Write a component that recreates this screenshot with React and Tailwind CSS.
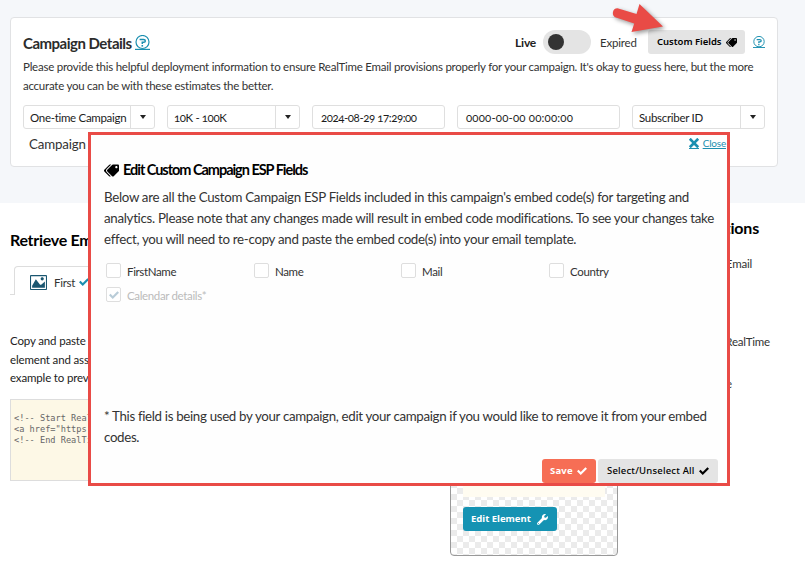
import React from "react";
import { ImCheckmark, ImCross, ImImage } from "react-icons/im";
import { FaTags, FaWrench } from "react-icons/fa";

function Help({ size }) {
  return (
    <svg width={size} height={size} viewBox="0 0 15 15" fill="none" stroke="#1b8fb0">
      <circle cx="7.5" cy="7" r="6.500" strokeWidth="1.200" />
      <path d="M4.600 4.600H8.500Q10.300 4.600 10.300 6 10.300 7.300 8.700 7.300H7.300V9" strokeWidth="1.500" />
      <path d="M7.300 10v1.600" strokeWidth="1.600" />
      <path d="M0 14.400H15" strokeWidth="1.200" />
    </svg>
  );
}

function Field({ children, className, select }) {
  return (
    <div className={"flex h-6 rounded-[3px] border border-[#dfdfdf] bg-white text-[11.5px] leading-[23px] whitespace-nowrap text-[#1c1c1c] " + className}>
      <span className="grow">{children}</span>
      {select && (
        <span className="flex w-6 shrink-0 items-center justify-center border-l border-[#dfdfdf]">
          <svg width="6" height="4" viewBox="0 0 6 4"><path d="M0 0h6L3 4z" fill="#222" /></svg>
        </span>
      )}
    </div>
  );
}

function Check({ label, className, done }) {
  return (
    <label className={"flex items-center text-[11.5px] tracking-[-0.35px] " + className}>
      <span className="mr-[6px] flex size-[15px] items-center justify-center rounded-[2px] border border-[#dedede] bg-white">
        {done && <ImCheckmark size={10} color="#b9ccd8" />}
      </span>
      <span className="pt-[3px]">{label}</span>
    </label>
  );
}

export default function App() {
  return (
    <div className="relative h-[577px] w-[805px] overflow-hidden bg-white font-['Lato',sans-serif] text-[#333]">
      <section className="h-[203px] bg-[#f5f7fa] pt-[17px] pl-[10px]">
        <div className="h-[150px] w-[768px] rounded-[4px] border border-[#e1e2e4] bg-white pt-3 pl-3">
          <div className="flex h-6 items-center whitespace-nowrap">
            <h2 className="w-[112px] pt-[2px] text-[15px] font-bold tracking-[-0.5px] text-[#2c2c2c]">Campaign Details</h2>
            <Help size={15} />
            <span className="ml-[365px] w-[28px] pt-[2px] text-xs font-bold tracking-[-0.2px] text-[#222]">Live</span>
            <span className="flex h-6 w-12 items-center rounded-full bg-[#e4e4e4] pl-[5px]">
              <span className="size-4 rounded-full bg-[#333]" />
            </span>
            <span className="ml-[9px] w-[48px] pt-[2px] text-[11.5px] tracking-[-0.2px]">Expired</span>
            <button className="flex h-6 w-[97px] items-center gap-1 rounded-[3px] bg-[#e4e4e4] pl-[9px] font-['Noto_Sans',sans-serif] text-[9.5px] font-semibold tracking-[-0.02px] text-black">
              Custom Fields <FaTags size={11} className="-scale-x-100" />
            </button>
            <span className="ml-2"><Help size={12} /></span>
          </div>
          <p className="mt-[3px] text-[11.5px] leading-[19px] tracking-[-0.24px] whitespace-nowrap">
            Please provide this helpful deployment information to ensure RealTime Email provisions properly for your campaign. It's okay to guess here, but the more
            <br />
            accurate you can be with these estimates the better.
          </p>
          <div className="mt-[10px] flex gap-3 oldstyle-nums">
            <Field select className="w-[132px] pl-[6px] tracking-[-0.3px]">One-time Campaign</Field>
            <Field select className="w-[133px] pl-[6px] tracking-[-0.4px]">10K - 100K</Field>
            <Field className="w-[133px] pl-2 tracking-[-0.45px]">2024-08-29 17:29:00</Field>
            <Field className="w-[163px] pl-2 tracking-[0.15px]">0000-00-00 00:00:00</Field>
            <Field select className="w-[133px] pl-[6px] tracking-[-0.3px]">Subscriber ID</Field>
          </div>
          <p className="mt-[5px] pl-[6px] text-[13.3px] leading-5 tracking-[-0.15px] [word-spacing:3px]">Campaign Type</p>
        </div>
      </section>

      <section className="flex h-[374px] pl-[10px]">
        <div className="w-[440px] pt-[26px]">
          <h2 className="text-[16px] leading-[22px] font-bold tracking-[-0.3px] text-black">Retrieve Embed Code</h2>
          <div className="mt-[15px] flex h-[29px]">
            <span className="w-1 border-b border-[#ddd]" />
            <div className="flex w-[130px] items-center rounded-t-[4px] border border-b-0 border-[#ddd] pt-[2px] pl-[15px] text-[11.5px] tracking-[-0.3px]">
              <ImImage size={17} color="#1a5670" />
              <span className="mr-1 ml-[7px] pt-[2px]">First</span>
              <ImCheckmark size={10} color="#1b8fb0" />
            </div>
          </div>
          <p className="mt-[37px] text-[11.5px] leading-[18.5px] tracking-[-0.15px] whitespace-nowrap text-[#222]">
            Copy and paste this embed code
            <br />element and associated content
            <br />example to preview your email
          </p>
          <pre className="mt-[11px] h-[82px] w-[420px] border border-[#ddd] bg-[#fdf8e6] pt-[13px] pl-[3px] font-['DejaVu_Sans_Mono',monospace] text-[8.64px] leading-[11px] text-[#666]">{`<!-- Start RealTime Email -->
<a href="https://content">
<!-- End RealTime Email -->`}</pre>
        </div>
        <div className="mt-[140px] h-[213px] w-[168px] rounded-[4px] border border-[#999] bg-[repeating-conic-gradient(#ebebeb_0_25%,#fff_0_50%)] bg-[length:12px_12px] pl-3">
          <div className="h-[153px] w-[142px] bg-[#fffcf1]" />
          <button className="mt-[10px] flex h-6 w-[94px] items-center gap-[6px] rounded-[3px] bg-[#1593b3] pl-2 font-['Noto_Sans',sans-serif] text-[9.5px] font-bold whitespace-nowrap text-white">
            Edit Element <FaWrench size={11} />
          </button>
        </div>
        <aside className="flex w-[152px] flex-col items-end pt-[14px] text-[11.5px] tracking-[-0.2px] whitespace-nowrap">
          <h2 className="mr-[11px] text-[16px] leading-[22px] font-bold text-black">Questions</h2>
          <p className="mt-[16px] mr-[18px] leading-[18px]">Is RealTime Email</p>
          <p className="mt-[60px] leading-[18px]">What is RealTime</p>
          <p className="mt-[24px] mr-[38px] leading-[18px]">Can I change the</p>
        </aside>
      </section>

      <div className="absolute top-[132px] left-[88px] flex h-[354px] w-[642px] flex-col border-[3px] border-[#e94b46] bg-[#fefefe] pl-[13px]">
        <div className="flex h-[17px] items-center justify-end gap-1 pr-[1px] text-[#1b8fb0]">
          <span className="border-b border-[#1b8fb0]"><ImCross size={10} /></span>
          <span className="text-[10px] tracking-[-0.2px] underline">Close</span>
        </div>
        <h3 className="mt-[8px] flex h-[20px] items-center gap-1 text-[14.5px] font-bold tracking-[-1.03px] text-black">
          <FaTags size={15} className="-scale-x-100" /> Edit Custom Campaign ESP Fields
        </h3>
        <p className="mt-[7px] text-[13.3px] leading-[21px] tracking-[-0.3px] whitespace-nowrap">
          Below are all the Custom Campaign ESP Fields included in this campaign's embed code(s) for targeting and
          <br />analytics. Please note that any changes made will result in embed code modifications. To see your changes take
          <br />effect, you will need to re-copy and paste the embed code(s) into your email template.
        </p>
        <div className="mt-[13px] flex h-[15px] pl-[2px]">
          <Check className="w-[148px]" label="FirstName" />
          <Check className="w-[147px]" label="Name" />
          <Check className="w-[148px]" label="Mail" />
          <Check label="Country" />
        </div>
        <Check done className="mt-[9px] h-[15px] pl-[2px] text-[#bbb]" label="Calendar details*" />
        <p className="mt-[104px] text-[13.3px] leading-[21px] tracking-[-0.325px] whitespace-nowrap">
          * This field is being used by your campaign, edit your campaign if you would like to remove it from your embed
          <br />codes.
        </p>
        <div className="mt-auto flex justify-end gap-[2px] pr-[9px] font-['Noto_Sans',sans-serif] text-[9.5px] tracking-[0.2px] whitespace-nowrap">
          <button className="flex h-6 w-[54px] items-center gap-1 rounded-[3px] bg-[#f66e55] pl-2 font-bold text-white">Save <ImCheckmark size={10} /></button>
          <button className="flex h-6 w-[120px] items-center gap-1 rounded-[3px] bg-[#e4e4e4] pl-[9px] font-medium text-black">Select/Unselect All <ImCheckmark size={10} /></button>
        </div>
      </div>

      <svg className="absolute top-0 left-[605px] drop-shadow-[2px_2px_2px_rgba(0,0,0,0.4)]" width="65" height="40" viewBox="0 0 65 40">
        <path d="M12.500 8.200 31.500 14 34.500 4 58 26.500 26.500 32 29.200 23.500 11 17.500a4.800 4.800 0 0 1 1.500-9.300z" fill="#e94b46" />
      </svg>
    </div>
  );
}
